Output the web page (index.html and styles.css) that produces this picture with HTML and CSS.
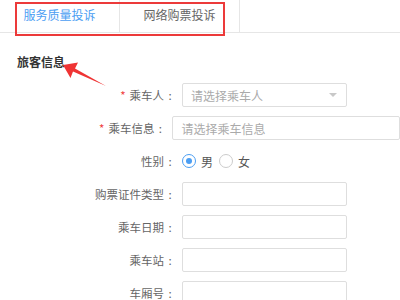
FILE: index.html
```html
<!DOCTYPE html>
<html lang="zh-CN">
<head>
    <meta charset="UTF-8">
    <meta name="viewport" content="width=device-width, initial-scale=1.0">
    <title>投诉</title>
    <link rel="stylesheet" href="styles.css">
</head>
<body>
    <div class="page">
        <div class="tabs">
            <div class="tab active">服务质量投诉</div>
            <div class="tab">网络购票投诉</div>
        </div>
        <div class="mark-box"></div>

        <h3 class="section-title">旅客信息</h3>
        <svg class="mark-arrow" width="60" height="40" viewBox="0 0 60 40">
            <polygon points="8,10 23,7.5 20,13.5 51,31 18,16.5 15.5,23" fill="#ef3434"/>
        </svg>

        <form class="form">
            <div class="row">
                <label class="label"><span class="req">*</span>乘车人<span class="colon">:</span></label>
                <div class="field select">请选择乘车人<span class="caret"></span></div>
            </div>
            <div class="row">
                <label class="label"><span class="req">*</span>乘车信息<span class="colon">:</span></label>
                <input class="field wide" type="text" placeholder="请选择乘车信息">
            </div>
            <div class="row">
                <label class="label">性别<span class="colon">:</span></label>
                <span class="radio on"></span><span class="radio-text">男</span>
                <span class="radio"></span><span class="radio-text">女</span>
            </div>
            <div class="row">
                <label class="label">购票证件类型<span class="colon">:</span></label>
                <input class="field" type="text">
            </div>
            <div class="row">
                <label class="label">乘车日期<span class="colon">:</span></label>
                <input class="field" type="text">
            </div>
            <div class="row">
                <label class="label">乘车站<span class="colon">:</span></label>
                <input class="field" type="text">
            </div>
            <div class="row">
                <label class="label">车厢号<span class="colon">:</span></label>
                <input class="field" type="text">
            </div>
        </form>
    </div>
</body>
</html>
```

FILE: styles.css
```css
body{
    margin:0;
    background-color:#fff;
    font-family:"Noto Sans CJK SC", "Noto Sans", sans-serif;
    font-size:12px;
    color:#666;
}
.page{
    position:relative;
    width:400px;
    height:300px;
    overflow:hidden;
}
.tabs{
    display:flex;
    height:32px;
    border-bottom:1px solid #e6e6e6;
}
.tab{
    width:119px;
    border-right:1px solid #e6e6e6;
    line-height:30px;
    text-align:center;
    color:#666;
}
.tab.active{
    color:#4b9ef3;
}
.mark-box{
    position:absolute;
    left:15px;
    top:2px;
    width:206px;
    height:30px;
    border:2px solid #ec3a3a;
}
.section-title{
    margin:21px 0 0 17px;
    font-size:12px;
    line-height:16px;
    font-weight:bold;
    color:#333;
}
.mark-arrow{
    position:absolute;
    left:55px;
    top:55px;
}
.form{
    margin-top:13px;
    display:flex;
    flex-direction:column;
    gap:9px;
}
.row{
    display:flex;
    align-items:center;
    height:24px;
}
.label{
    width:176px;
    margin-right:6px;
    text-align:right;
    font-size:11.5px;
    color:#666;
}
.colon{
    display:inline-block;
    width:12px;
    text-align:center;
}
.req{
    color:#f04040;
    margin-right:4px;
}
.field{
    width:165px;
    height:24px;
    box-sizing:border-box;
    border:1px solid #dedede;
    border-radius:2px;
    padding:0 0 0 8px;
    font-family:inherit;
    font-size:12px;
    color:#aaa;
    outline:none;
}
.field::placeholder{
    color:#aaa;
}
.field.wide{
    width:240px;
}
.select{
    display:flex;
    align-items:center;
    justify-content:space-between;
}
.caret{
    width:0;
    height:0;
    border-left:4px solid transparent;
    border-right:4px solid transparent;
    border-top:4px solid #c8c8c8;
    margin-right:9px;
}
.radio{
    width:14px;
    height:14px;
    box-sizing:border-box;
    border:1px solid #ccc;
    border-radius:50%;
    margin-right:5px;
    display:flex;
    align-items:center;
    justify-content:center;
}
.radio.on{
    border-color:#4b9ef3;
}
.radio.on::after{
    content:"";
    width:6px;
    height:6px;
    border-radius:50%;
    background-color:#4b9ef3;
}
.radio-text{
    margin-right:6px;
    color:#555;
}
```
